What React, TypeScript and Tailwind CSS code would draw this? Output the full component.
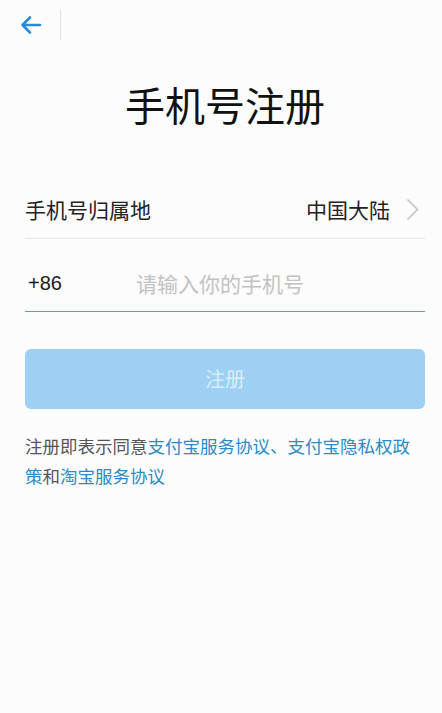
export default function App() {
  return (
    <div
      className="min-h-[713px] w-full bg-[#fcfcfc] text-[#222]"
      style={{ fontFamily: '"Noto Sans CJK SC", "Noto Sans", sans-serif' }}
    >
      <div className="flex h-[50px] items-center">
        <button className="ml-[19px] flex h-[24px] w-[24px] items-center justify-center">
          <svg width="22" height="20" viewBox="0 0 22 20" fill="none">
            <path
              d="M20 10H3M10 2.5L2.5 10L10 17.5"
              stroke="#2b8ad6"
              strokeWidth="2.6"
              strokeLinecap="round"
              strokeLinejoin="round"
            />
          </svg>
        </button>
        <div className="ml-[17px] h-[30px] w-px bg-[#e2e2e2]" />
      </div>

      <h1 className="mt-[34px] pl-[8px] text-center text-[40px] leading-[40px] font-normal text-[#111]">
        手机号注册
      </h1>

      <div className="mt-[57px] pl-[25px] pr-[17px]">
        <div className="flex h-[58px] items-center justify-between border-b border-[#e6e6e6]">
          <span className="text-[21px]">手机号归属地</span>
          <div className="flex items-center">
            <span className="text-[21px]">中国大陆</span>
            <svg className="ml-[16px] mr-[6px]" width="13" height="23" viewBox="0 0 13 23" fill="none">
              <path d="M1.5 1.5L11.5 11.5L1.5 21.5" stroke="#c4c4c4" strokeWidth="1.6" />
            </svg>
          </div>
        </div>

        <div className="flex h-[73px] items-end border-b border-[#5f9fb8] pb-[16px]">
          <span
            className="w-[111px] pl-[3px] text-[20px] leading-[24px] text-[#1a1a1a]"
            style={{ fontFamily: '"Liberation Sans", Arial, sans-serif' }}
          >
            +86
          </span>
          <span className="text-[21px] leading-[24px] text-[#c2c2c2]">请输入你的手机号</span>
        </div>

        <button className="mt-[37px] flex h-[60px] w-full items-center justify-center rounded-md bg-[#9dd0f3] text-[20px] text-[#d9eefc]">
          注册
        </button>

        <p className="mt-[22px] text-[17.5px] leading-[30px] text-[#555]">
          注册即表示同意<span className="text-[#2a8bc5]">支付宝服务协议、支付宝隐私权政策</span>和<span className="text-[#2a8bc5]">淘宝服务协议</span>
        </p>
      </div>
    </div>
  );
}
